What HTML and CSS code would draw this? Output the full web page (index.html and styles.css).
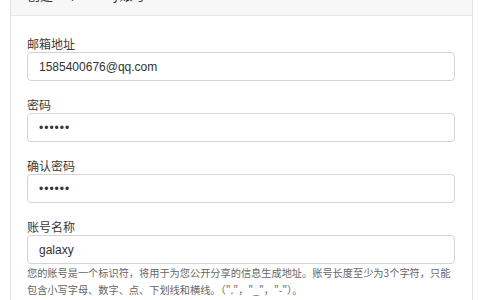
FILE: index.html
```html
<!DOCTYPE html>
<html lang="zh-CN">
<head>
<meta charset="utf-8">
<link rel="stylesheet" href="styles.css">
</head>
<body>
<div class="card">
  <div class="card-header">创建一个Galaxy账号</div>
  <form class="card-body">
    <div class="group">
      <label class="label">邮箱地址</label>
      <input class="field" type="text" value="1585400676@qq.com">
    </div>
    <div class="group">
      <label class="label">密码</label>
      <input class="field pw" type="password" value="123456">
    </div>
    <div class="group">
      <label class="label">确认密码</label>
      <input class="field pw" type="password" value="123456">
    </div>
    <div class="group">
      <label class="label">账号名称</label>
      <input class="field" type="text" value="galaxy">
      <div class="help">您的账号是一个标识符，将用于为您公开分享的信息生成地址。账号长度至少为3个字符，只能包含小写字母、数字、点、下划线和横线。（"."，"_"，"-"）。</div>
    </div>
  </form>
</div>
</body>
</html>
```

FILE: styles.css
```css
html, body {
  margin: 0;
  padding: 0;
  background: #ffffff;
}
body {
  font-family: "Liberation Sans", "Noto Sans CJK SC", sans-serif;
  color: #333333;
  overflow: hidden;
  height: 300px;
}
.card {
  margin-left: 10px;
  width: 461px;
  border: 1px solid #e3e3e3;
  border-top: none;
  margin-top: -14px;
}
.card-header {
  background: #f7f7f7;
  border-bottom: 1px solid #e6e6e6;
  font-size: 13px;
  line-height: 20px;
  padding: 0 16px 9px 16px;
  color: #333;
}
.card-body {
  display: flex;
  flex-direction: column;
  gap: 15px;
  padding: 19px 17px 20px 16px;
  margin: 0;
}
.group {
  display: flex;
  flex-direction: column;
}
.label {
  font-family: "Noto Sans CJK SC", sans-serif;
  font-size: 12px;
  line-height: 17px;
  color: #3a3a3a;
}
.field {
  box-sizing: border-box;
  height: 29px;
  width: 100%;
  border: 1px solid #d4d4d4;
  border-radius: 4px;
  padding: 0 11px;
  font-family: "Liberation Sans", sans-serif;
  font-size: 12px;
  color: #333;
  background: #fff;
  outline: none;
  margin: 0;
}
.pw {
  letter-spacing: 1px;
}
.help {
  font-family: "Noto Sans CJK SC", sans-serif;
  font-size: 10.2px;
  line-height: 17px;
  color: #666666;
  margin-top: 0;
}
```
